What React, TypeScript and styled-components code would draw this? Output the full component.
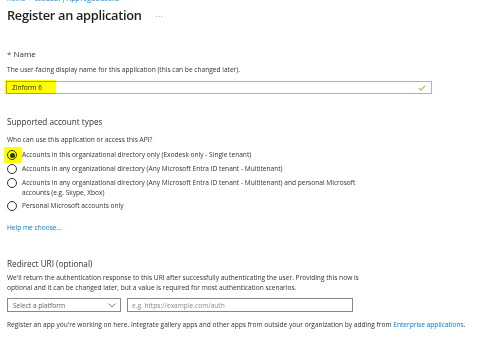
import React from "react";
import styled, { createGlobalStyle } from "styled-components";

const Global = createGlobalStyle`
  html, body { margin: 0; padding: 0; background: #ffffff; }
  body {
    font-family: "Segoe UI", "Open Sans", "Noto Sans", sans-serif;
    color: #323130;
    overflow: hidden;
  }
  * { box-sizing: border-box; }
`;

const Page = styled.div`
  width: 482px;
  height: 338px;
  overflow: hidden;
  padding: 0 7px;
`;

const Breadcrumb = styled.div`
  margin-top: -5px;
  height: 8px;
  line-height: 8px;
  font-size: 6.5px;
  color: #0078d4;
  white-space: nowrap;
`;

const Sep = styled.span`
  color: #605e5c;
  margin: 0 3px;
`;

const TitleRow = styled.div`
  display: flex;
  align-items: center;
  gap: 14px;
  height: 24px;
`;

const Title = styled.h1`
  margin: 0;
  font-size: 12.8px;
  font-weight: 600;
  color: #201f1e;
  letter-spacing: -0.3px;
`;

const More = styled.span`
  font-size: 8px;
  color: #8a8886;
  letter-spacing: 0.5px;
`;

const FieldLabel = styled.div`
  margin-top: 21px;
  line-height: 12px;
  font-size: 8px;
  color: #323130;
`;

const Required = styled.span`
  color: #a4262c;
  margin-right: 2px;
`;

const Small = styled.div<{ $mt: number }>`
  margin-top: ${(p) => p.$mt}px;
  font-size: 6.6px;
  line-height: 10px;
  color: #323130;
  white-space: nowrap;
`;

const NameInput = styled.div`
  position: relative;
  margin-top: 6px;
  margin-left: -1px;
  width: 426px;
  height: 13px;
  border: 1.5px solid #c9a0dc;
  display: flex;
  align-items: center;
  justify-content: space-between;
  padding: 0 5px 0 5px;
  font-size: 6.6px;
  color: #201f1e;
`;

const Highlight = styled.span`
  position: absolute;
  background: #ffff00;
  mix-blend-mode: multiply;
  pointer-events: none;
`;

const InputHighlight = styled(Highlight)`
  left: -2px;
  top: -2px;
  width: 51px;
  height: 14px;
`;

const InputText = styled.span`
  position: relative;
`;

const SectionTitle = styled.div<{ $mt: number }>`
  margin-top: ${(p) => p.$mt}px;
  font-size: 8.2px;
  line-height: 14px;
  color: #323130;
`;

const RadioList = styled.div`
  margin-top: 5px;
  display: flex;
  flex-direction: column;
  gap: 4px;
`;

const RadioRow = styled.div`
  position: relative;
  display: flex;
  align-items: flex-start;
  gap: 5px;
  font-size: 6.6px;
  line-height: 9.5px;
  color: #323130;
`;

const RadioCircle = styled.span<{ $checked?: boolean }>`
  flex: none;
  width: 10px;
  height: 10px;
  border-radius: 50%;
  border: 1px solid #323130;
  display: flex;
  align-items: center;
  justify-content: center;
  background: #fff;
  &::after {
    content: "";
    width: 5px;
    height: 5px;
    border-radius: 50%;
    background: ${(p) => (p.$checked ? "#1f3d1f" : "transparent")};
  }
`;

const RadioHighlight = styled(Highlight)`
  left: -3px;
  top: -3px;
  width: 18px;
  height: 16px;
`;

const Link = styled.a`
  color: #0078d4;
  text-decoration: none;
`;

const HelpLink = styled.div`
  margin-top: 12px;
  font-size: 6.6px;
  line-height: 10px;
  color: #0078d4;
`;

const InputRow = styled.div`
  margin-top: 5px;
  display: flex;
  gap: 6px;
`;

const SelectBox = styled.div`
  width: 114px;
  height: 14px;
  border: 1px solid #8a8886;
  display: flex;
  align-items: center;
  justify-content: space-between;
  padding: 0 4px 0 5px;
  font-size: 6.6px;
  color: #605e5c;
`;

const UrlBox = styled.div`
  width: 226px;
  height: 14px;
  border: 1px solid #8a8886;
  display: flex;
  align-items: center;
  padding: 0 4px;
  font-size: 6.6px;
  color: #8a8886;
`;

const Check = () => (
  <svg width="8" height="6" viewBox="0 0 8 6">
    <path d="M0.8 3.2 L2.9 5.1 L7.2 0.8" fill="none" stroke="#8cc152" strokeWidth="1.1" />
  </svg>
);

const Chevron = () => (
  <svg width="8" height="5" viewBox="0 0 8 5">
    <path d="M0.5 0.6 L4 4 L7.5 0.6" fill="none" stroke="#605e5c" strokeWidth="0.8" />
  </svg>
);

export default function App() {
  return (
    <>
      <Global />
      <Page>
        <Breadcrumb>
          Home<Sep>&gt;</Sep>Exodesk | App registrations<Sep>&gt;</Sep>
        </Breadcrumb>
        <TitleRow>
          <Title>Register an application</Title>
          <More>···</More>
        </TitleRow>

        <FieldLabel>
          <Required>*</Required>Name
        </FieldLabel>
        <Small $mt={5}>The user-facing display name for this application (this can be changed later).</Small>
        <NameInput>
          <InputHighlight />
          <InputText>Zinform 6</InputText>
          <Check />
        </NameInput>

        <SectionTitle $mt={21}>Supported account types</SectionTitle>
        <Small $mt={6}>Who can use this application or access this API?</Small>
        <RadioList>
          <RadioRow>
            <RadioHighlight />
            <RadioCircle $checked />
            <span>Accounts in this organizational directory only (Exodesk only - Single tenant)</span>
          </RadioRow>
          <RadioRow>
            <RadioCircle />
            <span>Accounts in any organizational directory (Any Microsoft Entra ID tenant - Multitenant)</span>
          </RadioRow>
          <RadioRow>
            <RadioCircle />
            <span>
              Accounts in any organizational directory (Any Microsoft Entra ID tenant - Multitenant) and personal Microsoft
              <br />
              accounts (e.g. Skype, Xbox)
            </span>
          </RadioRow>
          <RadioRow>
            <RadioCircle />
            <span>Personal Microsoft accounts only</span>
          </RadioRow>
        </RadioList>
        <HelpLink>Help me choose...</HelpLink>

        <SectionTitle $mt={24}>Redirect URI (optional)</SectionTitle>
        <Small $mt={2}>
          We'll return the authentication response to this URI after successfully authenticating the user. Providing this now is
          <br />
          optional and it can be changed later, but a value is required for most authentication scenarios.
        </Small>
        <InputRow>
          <SelectBox>
            <span>Select a platform</span>
            <Chevron />
          </SelectBox>
          <UrlBox>e.g. https://example.com/auth</UrlBox>
        </InputRow>
        <Small $mt={8}>
          Register an app you're working on here. Integrate gallery apps and other apps from outside your organization by adding from{" "}
          <Link>Enterprise applications</Link>.
        </Small>
      </Page>
    </>
  );
}
